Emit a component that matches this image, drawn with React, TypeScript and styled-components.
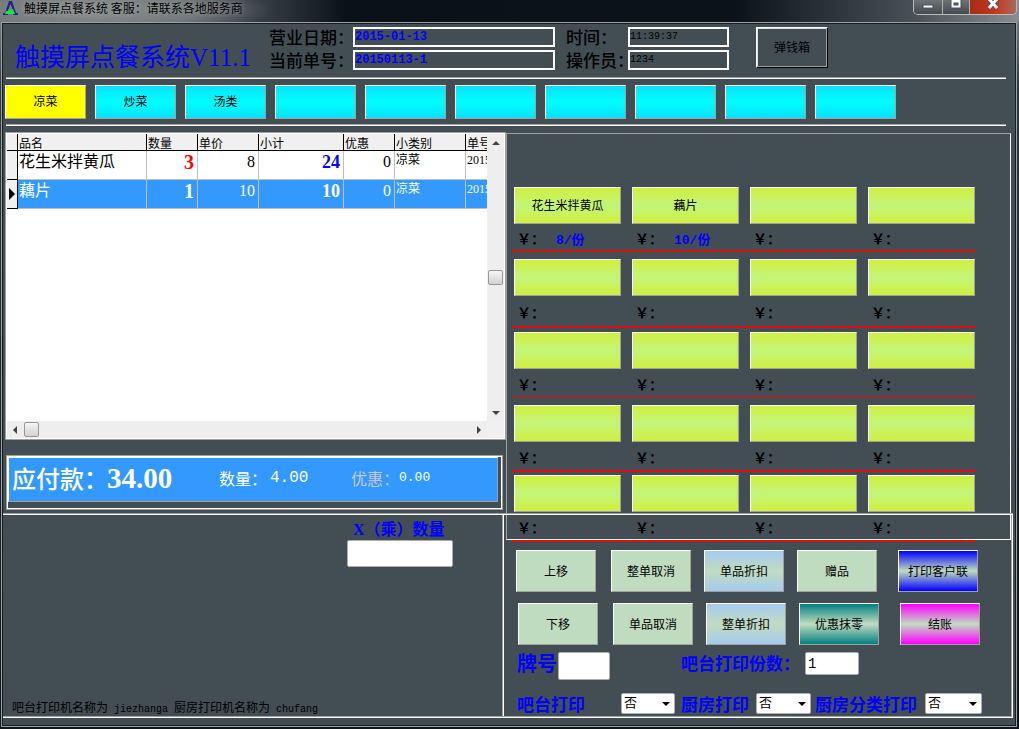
import React from "react";
import styled, { createGlobalStyle, css } from "styled-components";

const ink = "#434e54";
const grey = "#a0a0a0";
const blue = "#0000ff";

const sans = `"Liberation Mono", "Noto Sans CJK SC", monospace`;
const serif = `"Liberation Serif", "Noto Sans CJK SC", serif`;

const Global = createGlobalStyle`
  * { box-sizing: border-box; }
  body { margin: 0; background: #0d1418; }
  body, button, input, select { font-family: "Noto Sans CJK SC", sans-serif; }
`;

const bevel = css`
  border: 1px solid;
  border-color: #fff ${grey} ${grey} #fff;
`;

const Frame = styled.div`
  display: flex;
  flex-direction: column;
  min-height: 100vh;
  padding: 0 2px 2px 1px;
  background: linear-gradient(180deg, #8b9094 0, #30383d 12%, #10161a 100%);
`;

const TitleBar = styled.header`
  display: flex;
  align-items: flex-start;
  height: 22px;
  margin: 0 -2px 0 -1px;
  padding-left: 3px;
  background:
    radial-gradient(ellipse 180px 30px at 90px 10px, #8e9192 0, #74797b 60%, transparent 100%),
    linear-gradient(90deg, #62686b 0, #343d43 26%, #0b1217 34%, #0c1318 72%, #4b5256 90%, #8a8d8f 100%);
`;

const AppIcon = styled.svg`
  width: 15px;
  height: 16px;
  flex: none;
`;

const Caption = styled.h1`
  flex: 1;
  margin: 0 0 0 6px;
  font-size: 12px;
  font-weight: 400;
  line-height: 16px;
  color: #000;
  text-shadow: 0 0 5px #a5a8aa;
`;

const WindowButtons = styled.div`
  display: flex;
  height: 15px;
  margin-right: 2px;
  border: 1px solid #b9bdbf;
  border-top: 0;
  border-radius: 0 0 5px 5px;
  overflow: hidden;
`;

const WindowButton = styled.button<{ $width: number; $close?: boolean }>`
  display: flex;
  justify-content: center;
  width: ${(p) => p.$width}px;
  height: 14px;
  padding: 0;
  border: 0;
  border-left: 1px solid #b0b4b6;
  background: ${(p) =>
    p.$close ? "linear-gradient(90deg, #a62c16, #c5371c 55%, #a86a5e)" : "linear-gradient(#6d7375, #444b4e)"};
  &:first-child { border-left: 0; }
`;

const Client = styled.main`
  display: flex;
  flex: 1;
  flex-direction: column;
  padding: 1px;
  border: 1px solid #9ca3a7;
  background: ${ink};
  box-shadow: inset 0 0 0 1px #161d21;
`;

const Banner = styled.section`
  display: flex;
  height: 53px;
  padding-left: 12px;
`;

const Brand = styled.h2`
  width: 254px;
  margin: 0;
  padding-top: 17px;
  font-family: ${serif};
  font-size: 25px;
  font-weight: 400;
  line-height: 34px;
  white-space: nowrap;
  color: ${blue};
`;

const Fields = styled.div<{ $label: number; $input: number; $gap: number }>`
  display: grid;
  grid-template-columns: ${(p) => p.$label}px ${(p) => p.$input}px;
  grid-auto-rows: 20px;
  row-gap: 3px;
  align-content: start;
  margin-right: ${(p) => p.$gap}px;
  padding-top: 3px;
`;

const FieldLabel = styled.label`
  font-size: 17px;
  font-weight: 500;
  line-height: 20px;
  white-space: nowrap;
`;

const ReadOut = styled.input<{ $strong?: boolean }>`
  width: 100%;
  min-width: 0;
  height: 20px;
  padding: 0 0 1px;
  border: 2px solid #fff;
  background: transparent;
  font-family: ${sans};
  font-size: ${(p) => (p.$strong ? 12 : 10)}px;
  font-weight: ${(p) => (p.$strong ? 700 : 400)};
  color: ${(p) => (p.$strong ? blue : "#000")};
`;

const DrawerButton = styled.button`
  width: 72px;
  height: 41px;
  margin-top: 3px;
  padding: 0 0 2px;
  border: 1px solid;
  border-color: #fff #000 #000 #fff;
  box-shadow: inset -1px -1px 0 ${grey}, inset 1px 1px 0 #dde0e2;
  background: ${ink};
  font-size: 12px;
`;

const Rule = styled.hr`
  height: 2px;
  margin: 0 9px 0 3px;
  border: 0;
  border-top: 1px solid ${grey};
  border-bottom: 1px solid #fff;
`;

const Categories = styled.nav`
  display: flex;
  gap: 9px;
  padding: 6px 2px 5px;
`;

const CategoryButton = styled.button<{ $active?: boolean }>`
  ${bevel}
  width: 81px;
  height: 34px;
  padding: 0 0 3px;
  background: ${(p) => (p.$active ? "#ffff00" : "linear-gradient(#0ae0fa, #00ffff 50%, #0ae0fa)")};
  font-size: 12px;
`;

const Workspace = styled.div`
  display: grid;
  flex: 1;
  grid-template-columns: minmax(0, 503fr) minmax(0, 509fr);
  padding-bottom: 7px;
`;

const Column = styled.div<{ $top: number }>`
  display: flex;
  flex-direction: column;
  padding-top: ${(p) => p.$top}px;
`;

const OrderPanel = styled.section`
  display: grid;
  grid-template-columns: minmax(0, 1fr) 17px;
  grid-template-rows: 287px 17px;
  margin-left: 2px;
  padding: 1px;
  border: 1px solid ${grey};
  background: #fff;
`;

const TableClip = styled.div`
  overflow: hidden;
`;

const OrderTable = styled.table`
  width: 481px;
  border-collapse: separate;
  border-spacing: 0;
  table-layout: fixed;
`;

const HeadCell = styled.th<{ $width: number }>`
  width: ${(p) => p.$width}px;
  height: 17px;
  padding: 0 0 0 1px;
  border-right: 1px solid #000;
  border-bottom: 1px solid #000;
  background: #f0f0f0;
  font-size: 12px;
  font-weight: 400;
  line-height: 15px;
  text-align: left;
  white-space: nowrap;
  overflow: hidden;
  &:last-child { border-right: 0; }
`;

const OrderRow = styled.tr<{ $selected?: boolean }>`
  background: ${(p) => (p.$selected ? "#3399ff" : "#fff")};
  color: ${(p) => (p.$selected ? "#fff" : "#000")};
`;

const Cell = styled.td<{ $size?: number; $tone?: string; $number?: boolean; $strong?: boolean }>`
  height: 29px;
  padding: 0 3px 0 1px;
  border-right: 1px solid #c0c0c0;
  border-bottom: 1px solid #c0c0c0;
  font-family: ${serif};
  font-size: ${(p) => p.$size ?? 16}px;
  font-weight: ${(p) => (p.$strong ? 700 : 400)};
  line-height: ${(p) => ((p.$size ?? 16) < 14 ? 18 : 22)}px;
  color: ${(p) => p.$tone ?? "inherit"};
  text-align: ${(p) => (p.$number ? "right" : "left")};
  vertical-align: top;
  white-space: nowrap;
  overflow: hidden;
  &:last-child { border-right: 0; padding-right: 0; }
`;

const Marker = styled.th`
  height: 29px;
  padding: 0;
  border-right: 1px solid #000;
  border-bottom: 1px solid #000;
  background: #f0f0f0;
  line-height: 0;
`;

const ScrollTrack = styled.div<{ $vertical?: boolean }>`
  display: flex;
  flex-direction: ${(p) => (p.$vertical ? "column" : "row")};
  justify-content: space-between;
  align-items: center;
  background: #eee;
`;

const ScrollArrow = styled.button`
  display: flex;
  align-items: center;
  justify-content: center;
  width: 17px;
  height: 17px;
  padding: 0;
  border: 0;
  background: transparent;
`;

const Thumb = styled.span`
  width: 15px;
  height: 15px;
  border: 1px solid #979797;
  border-radius: 2px;
  background: linear-gradient(#f5f5f5, #d2d2d2);
`;

const LeftThumb = styled.span`
  display: flex;
  align-items: center;
`;

const Corner = styled.div`
  background: #f0f0f0;
`;

const TotalFrame = styled.section`
  margin: 15px 3px 3px;
  padding: 1px 4px 7px 1px;
  border: 1px solid ${grey};
  box-shadow: inset 0 0 0 1px #fff;
`;

const TotalBar = styled.div`
  ${bevel}
  display: grid;
  grid-template-columns: 95px 112px 51px 81px 48px 1fr;
  align-items: center;
  height: 45px;
  padding: 0 0 4px 3px;
  background: #3399ff;
  color: #fff;
  white-space: nowrap;
`;

const TotalText = styled.span<{ $size: number; $family?: string; $weight?: number; $tone?: string }>`
  font-family: ${(p) => p.$family ?? "inherit"};
  font-size: ${(p) => p.$size}px;
  font-weight: ${(p) => p.$weight ?? 400};
  line-height: 36px;
  color: ${(p) => p.$tone ?? "#fff"};
`;

const QuantityPanel = styled.section`
  display: flex;
  flex: 1;
  flex-direction: column;
  justify-content: space-between;
  margin-right: 2px;
  padding: 6px 0 0 9px;
  border: 1px solid #fff;
  border-top-color: ${grey};
  border-left: 0;
  box-shadow: inset 0 1px 0 #fff, inset -1px -1px 0 ${grey};
`;

const QuantityField = styled.div`
  display: flex;
  flex-direction: column;
  width: 106px;
  margin-left: 335px;
`;

const BlueLabel = styled.label<{ $size?: number }>`
  font-size: ${(p) => p.$size ?? 17}px;
  font-weight: 700;
  line-height: 22px;
  color: ${blue};
  white-space: nowrap;
`;

const QuantityLabel = styled(BlueLabel)`
  padding-left: 6px;
  line-height: 20px;
  font-family: ${serif};
`;

const TextBox = styled.input<{ $width: number; $height: number }>`
  width: ${(p) => p.$width}px;
  height: ${(p) => p.$height}px;
  padding: 0 2px;
  border: 1px solid #abadb3;
  border-radius: 2px;
  background: #fff;
  font-family: ${sans};
  font-size: 14px;
`;

const PrinterNote = styled.p`
  margin: 0;
  font-size: 12px;
  line-height: 14px;
`;

const PrinterName = styled.span`
  margin: 0 6px;
  font-family: ${sans};
  font-size: 10px;
`;

const MenuPanel = styled.section`
  margin-right: 4px;
  padding: 53px 0 0 5px;
  border: 1px solid;
  border-color: ${grey} #fff #fff ${grey};
`;

const DishGrid = styled.div`
  display: grid;
  grid-template-columns: repeat(4, 118px);
  padding-left: 2px;
`;

const Dish = styled.div`
  display: flex;
  flex-direction: column;
`;

const DishButton = styled.button`
  ${bevel}
  width: 107px;
  height: 37px;
  padding: 0 0 2px;
  background: linear-gradient(#d0f03e, #c2f47a 50%, #d0f03e);
  font-size: 12px;
`;

const PriceLine = styled.div<{ $height: number }>`
  display: flex;
  align-items: center;
  gap: 11px;
  height: ${(p) => p.$height}px;
  padding: 2px 0 0 3px;
  font-size: 14px;
  font-weight: 700;
`;

const Price = styled.span`
  font-family: ${sans};
  font-size: 13px;
  color: ${blue};
`;

const Dashes = styled.div<{ $height: number; $gap: number }>`
  width: 464px;
  height: ${(p) => p.$height}px;
  margin-bottom: ${(p) => p.$gap}px;
  background: repeating-linear-gradient(90deg, #f00 0 7px, ${ink} 7px 8px);
`;

const ControlPanel = styled.section`
  flex: 1;
  margin: -27px 2px 0 -3px;
  padding: 26px 0 0 9px;
  border: 1px solid #fff;
  border-top-color: ${grey};
  border-left: 0;
  box-shadow: inset 0 1px 0 #fff, inset -1px -1px 0 ${grey};
`;

const ActionRow = styled.div<{ $indent: number; $gap: number }>`
  display: grid;
  grid-template-columns: 95px 93px 93px 101px 80px;
  margin-bottom: ${(p) => p.$gap}px;
  padding-left: ${(p) => p.$indent}px;
`;

const fills = {
  plain: "#c0dcc0",
  sky: "linear-gradient(#a6caf0, #c0dcc0 50%, #a6caf0)",
  royal: "linear-gradient(#0000ff, #c0dcc0 50%, #0000ff)",
  teal: "linear-gradient(#008080, #c0dcc0 50%, #008080)",
  pink: "linear-gradient(#ff00ff, #c0dcc0 50%, #ff00ff)",
};

const ActionButton = styled.button<{ $fill: keyof typeof fills }>`
  ${bevel}
  width: 80px;
  height: 42px;
  padding: 0 0 2px;
  background: ${(p) => fills[p.$fill]};
  font-size: 12px;
  white-space: nowrap;
`;

const FormRow = styled.div<{ $columns: string; $height: number }>`
  display: grid;
  grid-template-columns: ${(p) => p.$columns};
  height: ${(p) => p.$height}px;
  padding-left: 5px;
`;

const SelectBox = styled.span<{ $width: number }>`
  position: relative;
  width: ${(p) => p.$width}px;
  height: 21px;
  &::after {
    content: "";
    position: absolute;
    top: 9px;
    right: 5px;
    border: 4px solid transparent;
    border-top-color: #000;
    border-bottom: 0;
    pointer-events: none;
  }
`;

const Select = styled.select`
  display: block;
  appearance: none;
  width: 100%;
  height: 21px;
  padding: 0 2px 3px;
  border: 1px solid #abadb3;
  border-radius: 2px;
  background: #fff;
  font-size: 13px;
  line-height: 16px;
  color: #000;
`;

const categories = ["凉菜", "炒菜", "汤类", "", "", "", "", "", "", ""];

const columns: [string, number][] = [
  ["", 11],
  ["品名", 129],
  ["数量", 51],
  ["单价", 61],
  ["小计", 85],
  ["优惠", 51],
  ["小类别", 71],
  ["单号", 22],
];

const orders = [
  { name: "花生米拌黄瓜", count: 3, price: 8, sum: 24, off: 0, kind: "凉菜", selected: false },
  { name: "藕片", count: 1, price: 10, sum: 10, off: 0, kind: "凉菜", selected: true },
];

const empty = { name: "", price: "" };
const dishRows = [
  {
    dishes: [{ name: "花生米拌黄瓜", price: "8/份" }, { name: "藕片", price: "10/份" }, empty, empty],
    priceHeight: 26, line: 2, gap: 7,
  },
  { dishes: [empty, empty, empty, empty], priceHeight: 30, line: 2, gap: 4 },
  { dishes: [empty, empty, empty, empty], priceHeight: 28, line: 1, gap: 7 },
  { dishes: [empty, empty, empty, empty], priceHeight: 28, line: 2, gap: 3 },
  { dishes: [empty, empty, empty, empty], priceHeight: 27, line: 0, gap: 0 },
];

const actions: { label: string; fill: keyof typeof fills }[][] = [
  [
    { label: "上移", fill: "plain" },
    { label: "整单取消", fill: "plain" },
    { label: "单品折扣", fill: "sky" },
    { label: "赠品", fill: "plain" },
    { label: "打印客户联", fill: "royal" },
  ],
  [
    { label: "下移", fill: "plain" },
    { label: "单品取消", fill: "plain" },
    { label: "整单折扣", fill: "sky" },
    { label: "优惠抹零", fill: "teal" },
    { label: "结账", fill: "pink" },
  ],
];

const arrowPaths = {
  up: "M0 6 L4 2 L8 6Z",
  down: "M0 2 L4 6 L8 2Z",
  left: "M5 0 L1 4 L5 8Z",
  right: "M2 0 L6 4 L2 8Z",
};

function Arrow({ to, label }: { to: keyof typeof arrowPaths; label: string }) {
  return (
    <ScrollArrow aria-label={label}>
      <svg width="8" height="8">
        <path d={arrowPaths[to]} fill="#444" />
      </svg>
    </ScrollArrow>
  );
}

function YesNo({ id, width }: { id: string; width: number }) {
  return (
    <SelectBox $width={width}>
      <Select id={id} defaultValue="否">
        <option>否</option>
        <option>是</option>
      </Select>
    </SelectBox>
  );
}

function Header() {
  return (
    <Banner>
      <Brand>触摸屏点餐系统V11.1</Brand>
      <Fields $label={84} $input={202} $gap={11}>
        <FieldLabel htmlFor="date">营业日期：</FieldLabel>
        <ReadOut id="date" $strong readOnly value="2015-01-13" />
        <FieldLabel htmlFor="bill">当前单号：</FieldLabel>
        <ReadOut id="bill" $strong readOnly value="20150113-1" />
      </Fields>
      <Fields $label={62} $input={101} $gap={27}>
        <FieldLabel htmlFor="time">时间：</FieldLabel>
        <ReadOut id="time" readOnly value="11:39:37" />
        <FieldLabel htmlFor="staff">操作员：</FieldLabel>
        <ReadOut id="staff" readOnly value="1234" />
      </Fields>
      <DrawerButton>弹钱箱</DrawerButton>
    </Banner>
  );
}

function Orders() {
  return (
    <OrderPanel>
      <TableClip>
        <OrderTable>
          <thead>
            <tr>
              {columns.map(([title, width]) => (
                <HeadCell key={title} $width={width}>{title}</HeadCell>
              ))}
            </tr>
          </thead>
          <tbody>
            {orders.map((o) => (
              <OrderRow key={o.name} $selected={o.selected}>
                <Marker>
                  {o.selected && (
                    <svg width="8" height="12">
                      <path d="M1 0 L7 6 L1 12Z" />
                    </svg>
                  )}
                </Marker>
                <Cell>{o.name}</Cell>
                <Cell $number $strong $size={20} $tone={o.selected ? undefined : "#f00"}>{o.count}</Cell>
                <Cell $number>{o.price}</Cell>
                <Cell $number $strong $size={18} $tone={o.selected ? undefined : blue}>{o.sum}</Cell>
                <Cell $number>{o.off}</Cell>
                <Cell $size={12}>{o.kind}</Cell>
                <Cell $size={12}>20150113-1</Cell>
              </OrderRow>
            ))}
          </tbody>
        </OrderTable>
      </TableClip>
      <ScrollTrack $vertical>
        <Arrow to="up" label="向上" />
        <Thumb />
        <Arrow to="down" label="向下" />
      </ScrollTrack>
      <ScrollTrack>
        <LeftThumb>
          <Arrow to="left" label="向左" />
          <Thumb />
        </LeftThumb>
        <Arrow to="right" label="向右" />
      </ScrollTrack>
      <Corner />
    </OrderPanel>
  );
}

function Totals() {
  return (
    <TotalFrame>
      <TotalBar>
        <TotalText $size={24} $weight={500}>应付款：</TotalText>
        <TotalText $size={29} $family={serif} $weight={700}>34.00</TotalText>
        <TotalText $size={16}>数量：</TotalText>
        <TotalText $size={16} $family={sans}>4.00</TotalText>
        <TotalText $size={16} $tone="#c8c8c8">优惠：</TotalText>
        <TotalText $size={13} $family={sans}>0.00</TotalText>
      </TotalBar>
    </TotalFrame>
  );
}

function Menu() {
  return (
    <MenuPanel>
      {dishRows.map((row, r) => (
        <React.Fragment key={r}>
          <DishGrid>
            {row.dishes.map((dish, i) => (
              <Dish key={i}>
                <DishButton>{dish.name}</DishButton>
                <PriceLine $height={row.priceHeight}>
                  ￥：{dish.price && <Price>{dish.price}</Price>}
                </PriceLine>
              </Dish>
            ))}
          </DishGrid>
          {row.line > 0 && <Dashes $height={row.line} $gap={row.gap} />}
        </React.Fragment>
      ))}
    </MenuPanel>
  );
}

function Controls() {
  return (
    <ControlPanel>
      <Dashes $height={2} $gap={8} />
      {actions.map((row, r) => (
        <ActionRow key={r} $indent={r === 0 ? 4 : 6} $gap={r === 0 ? 11 : 7}>
          {row.map((a) => (
            <ActionButton key={a.label} $fill={a.fill}>{a.label}</ActionButton>
          ))}
        </ActionRow>
      ))}
      <FormRow $columns="41px 123px 124px 1fr" $height={41}>
        <BlueLabel htmlFor="card" $size={20}>牌号</BlueLabel>
        <TextBox id="card" $width={52} $height={28} />
        <BlueLabel htmlFor="copies">吧台打印份数：</BlueLabel>
        <TextBox id="copies" $width={54} $height={23} defaultValue="1" />
      </FormRow>
      <FormRow $columns="104px 60px 75px 59px 110px 1fr" $height={22}>
        <BlueLabel htmlFor="bar">吧台打印</BlueLabel>
        <YesNo id="bar" width={54} />
        <BlueLabel htmlFor="kitchen">厨房打印</BlueLabel>
        <YesNo id="kitchen" width={55} />
        <BlueLabel htmlFor="sorted">厨房分类打印</BlueLabel>
        <YesNo id="sorted" width={57} />
      </FormRow>
    </ControlPanel>
  );
}

export default function App() {
  return (
    <>
      <Global />
      <Frame>
        <TitleBar>
          <AppIcon viewBox="0 0 15 16">
            <path d="M6 1h3l4 12h2v2h-5v-2h1L7.500 4 4 13h1v2H0v-2h2z" fill="#22228c" />
            <path d="M2 14l1-3h2l2-2 1 1 2-1 2 5z" fill="#18e838" />
          </AppIcon>
          <Caption>触摸屏点餐系统 客服：请联系各地服务商</Caption>
          <WindowButtons>
            <WindowButton $width={28} aria-label="最小化">
              <svg width="12" height="10"><rect x="1" y="5" width="10" height="3" fill="#fff" stroke="#4a4f66" /></svg>
            </WindowButton>
            <WindowButton $width={27} aria-label="最大化">
              <svg width="12" height="10">
                <path d="M1 -1h10v9H1z" fill="#fff" stroke="#4a4f66" />
                <rect x="4" y="3" width="4" height="2" fill="#666" stroke="#4a4f66" />
              </svg>
            </WindowButton>
            <WindowButton $width={47} $close aria-label="关闭">
              <svg width="12" height="10">
                <path d="M2 -1L10 8M10 -1L2 8" stroke="#4a4f66" strokeWidth="5" />
                <path d="M2 -1L10 8M10 -1L2 8" stroke="#fff" strokeWidth="3" />
              </svg>
            </WindowButton>
          </WindowButtons>
        </TitleBar>
        <Client>
          <Header />
          <Rule />
          <Categories>
            {categories.map((name, i) => (
              <CategoryButton key={i} $active={i === 0}>{name}</CategoryButton>
            ))}
          </Categories>
          <Rule />
          <Workspace>
            <Column $top={6}>
              <Orders />
              <Totals />
              <QuantityPanel>
                <QuantityField>
                  <QuantityLabel htmlFor="times" $size={16}>X（乘）数量</QuantityLabel>
                  <TextBox id="times" $width={106} $height={27} />
                </QuantityField>
                <PrinterNote>
                  吧台打印机名称为<PrinterName>jiezhanga</PrinterName>厨房打印机名称为<PrinterName>chufang</PrinterName>
                </PrinterNote>
              </QuantityPanel>
            </Column>
            <Column $top={7}>
              <Menu />
              <Controls />
            </Column>
          </Workspace>
        </Client>
      </Frame>
    </>
  );
}
